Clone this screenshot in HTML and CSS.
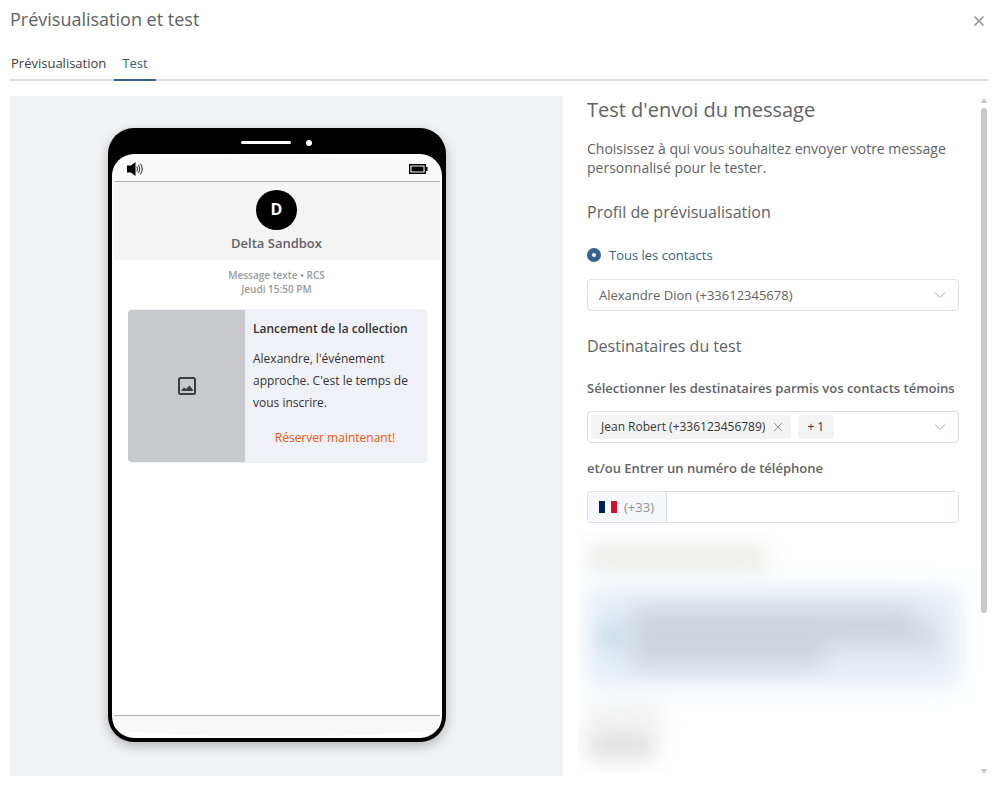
FILE: index.html
```html
<!DOCTYPE html>
<html lang="fr">
<head>
<meta charset="utf-8">
<meta name="viewport" content="width=device-width, initial-scale=1">
<title>Prévisualisation et test</title>
<link rel="stylesheet" href="styles.css">
</head>
<body>
<main class="dialog">
  <header class="dialog-header">
    <h1 class="dialog-title">Prévisualisation et test</h1>
    <button class="icon-button dialog-close" type="button" aria-label="Fermer">
      <svg width="12" height="12" viewBox="0 0 12 12"><path d="M1.500 1.500 10.500 10.500M10.500 1.500 1.500 10.500" fill="none" stroke="#909399" stroke-width="1.500"/></svg>
    </button>
  </header>
  <nav class="tabs">
    <button class="tab" type="button">Prévisualisation</button>
    <button class="tab tab-active" type="button">Test</button>
  </nav>
  <div class="columns">
    <section class="stage">
      <div class="phone">
        <div class="bezel"><span class="speaker"></span><span class="camera"></span></div>
        <div class="screen">
          <div class="status">
            <svg width="17" height="14" viewBox="0 0 17 14"><path d="M0 3.500H4L8.500 0V14L4 10.500H0Z"/><path d="M9.800 4.500Q11.300 7 9.800 9.500M11.600 3Q14 7 11.600 11M13.400 1.700Q17.200 7 13.400 12.300" fill="none" stroke="#222"/></svg>
            <svg width="19" height="10" viewBox="0 0 19 10"><path d="M.7.7H16.300V9.300H.7Z" fill="#fff" stroke="#000" stroke-width="1.400"/><path d="M2.500 2.500H14.500V7.500H2.500ZM17 3H18.500V7H17Z"/></svg>
          </div>
          <div class="sender">
            <span class="avatar">D</span>
            <span class="sender-name">Delta Sandbox</span>
          </div>
          <div class="thread">
            <p class="meta">Message texte • RCS<br>Jeudi 15:50 PM</p>
            <article class="card">
              <div class="card-media">
                <svg width="18" height="18" viewBox="0 0 18 18"><rect x="1" y="1" width="16" height="16" rx="1.500" fill="none" stroke="#3d3d3d" stroke-width="2"/><path d="M3.500 14V13L6 10.500 8 12 11.500 8.500 15 13V14Z" fill="#3d3d3d"/></svg>
              </div>
              <div class="card-body">
                <h2 class="card-title">Lancement de la collection</h2>
                <p class="card-text">Alexandre, l'événement approche. C'est le temps de vous inscrire.</p>
                <a class="card-action" href="#">Réserver maintenant!</a>
              </div>
            </article>
          </div>
          <div class="home-bar"></div>
        </div>
      </div>
    </section>
    <section class="settings">
      <form class="form">
        <h2 class="form-title">Test d'envoi du message</h2>
        <p class="intro">Choisissez à qui vous souhaitez envoyer votre message personnalisé pour le tester.</p>
        <h3 class="section-title">Profil de prévisualisation</h3>
        <label class="radio"><input class="radio-input" type="radio" name="profile" checked>Tous les contacts</label>
        <div class="field select-field">
          <select class="select" aria-label="Profil">
            <option>Alexandre Dion (+33612345678)</option>
          </select>
          <svg class="chevron" width="12" height="8" viewBox="0 0 12 8"><path d="M1 1.500 6 6.500 11 1.500" fill="none" stroke="#a8abb2"/></svg>
        </div>
        <h3 class="section-title recipients-title">Destinataires du test</h3>
        <span class="label" id="recipients-label">Sélectionner les destinataires parmis vos contacts témoins</span>
        <div class="field tags-field" role="group" aria-labelledby="recipients-label">
          <span class="tag">Jean Robert (+336123456789)
            <button class="icon-button" type="button" aria-label="Retirer Jean Robert"><svg width="10" height="10" viewBox="0 0 10 10"><path d="M1 1 9 9M9 1 1 9" fill="none" stroke="#909399"/></svg></button>
          </span>
          <span class="tag tag-more">+ 1</span>
          <button class="icon-button field-toggle" type="button" aria-label="Ouvrir la liste"><svg width="12" height="8" viewBox="0 0 12 8"><path d="M1 1.500 6 6.500 11 1.500" fill="none" stroke="#a8abb2"/></svg></button>
        </div>
        <label class="label" for="phone">et/ou Entrer un numéro de téléphone</label>
        <div class="field phone-field">
          <span class="prefix">
            <svg width="18" height="12" viewBox="0 0 18 12"><path d="M0 0H6V12H0Z" fill="#00205b"/><path d="M6 0H12V12H6Z" fill="#fff"/><path d="M12 0H18V12H12Z" fill="#d80f27"/></svg>
            (+33)
          </span>
          <input class="phone-input" id="phone" type="tel">
        </div>
      </form>
      <div class="redacted" aria-hidden="true">
        <div class="smudge smudge-heading"></div>
        <div class="smudge-box">
          <div class="smudge-dot"></div>
          <div class="smudge-lines">
            <div class="smudge-line line-first"></div>
            <div class="smudge-line"></div>
            <div class="smudge-line line-last"></div>
          </div>
        </div>
        <div class="smudge smudge-label"></div>
        <div class="smudge smudge-value"></div>
      </div>
    </section>
    <div class="scrollbar" aria-hidden="true">
      <svg width="6" height="5" viewBox="0 0 6 5"><path d="M3 0 6 5H0Z" fill="#c8c8c8"/></svg>
      <div class="track"><div class="thumb"></div></div>
      <svg width="6" height="5" viewBox="0 0 6 5"><path d="M0 0H6L3 5Z" fill="#c8c8c8"/></svg>
    </div>
  </div>
</main>
</body>
</html>
```

FILE: styles.css
```css
* {
  box-sizing: border-box;
}

body {
  margin: 0;
  background: #fff;
  color: #606266;
  font: 13px/20px "Open Sans", "Noto Sans", sans-serif;
}

h1, h2, h3, p {
  margin: 0;
}

button, input, select {
  font: inherit;
  color: inherit;
}

svg {
  display: block;
  flex: none;
}

.dialog {
  display: flex;
  flex-direction: column;
  min-height: 100vh;
  padding: 7px 10px 8px;
}

.dialog-header {
  display: flex;
  align-items: center;
  justify-content: space-between;
  padding-right: 5px;
}

.dialog-title {
  font-size: 18px;
  line-height: 24px;
  font-weight: 400;
}

.icon-button {
  padding: 0;
  border: 0;
  background: none;
}

.dialog-close {
  padding-top: 4px;
}

.tabs {
  display: flex;
  margin: 17px 2px 15px 0;
  box-shadow: inset 0 -2px #dcdcdc;
}

.tab {
  padding: 5px 8px 6px;
  border: 0;
  border-bottom: 2px solid transparent;
  background: none;
  color: #404040;
}

.tab:first-child {
  padding-left: 1px;
}

.tab-active {
  border-color: #35618a;
  color: #35618a;
}

.columns {
  flex: 1;
  display: grid;
  grid-template-columns: minmax(380px, 553fr) minmax(320px, 417fr) 10px;
}

.stage {
  display: flex;
  justify-content: center;
  padding: 32px 35px 34px 16px;
  margin-bottom: 1px;
  background: #f1f2f4;
}

.phone {
  display: flex;
  flex-direction: column;
  width: 338px;
  padding: 0 4px 4px;
  border-radius: 26px;
  background: #000;
  box-shadow: 0 4px 12px rgba(0, 0, 0, .25);
}

.bezel {
  display: flex;
  align-items: center;
  justify-content: center;
  gap: 15px;
  height: 26px;
  padding: 3px 2px 0 0;
}

.speaker {
  width: 50px;
  height: 3px;
  border-radius: 2px;
  background: #fff;
}

.camera {
  width: 6px;
  height: 6px;
  border-radius: 50%;
  background: #fff;
}

.screen {
  flex: 1;
  display: flex;
  flex-direction: column;
  padding: 2px;
  border-radius: 22px;
  background: #fff;
  overflow: hidden;
}

.status {
  display: flex;
  align-items: center;
  justify-content: space-between;
  height: 26px;
  padding: 0 12px 0 13px;
  border-bottom: 1px solid #b0b0b0;
  border-radius: 50% 50% 0 0 / 10px 10px 0 0;
  background: #f9f9f9;
}

.sender {
  display: flex;
  flex-direction: column;
  align-items: center;
  gap: 3px;
  padding: 8px 1px 7px 0;
  background: #f4f4f4;
}

.avatar {
  width: 41px;
  height: 40px;
  border-radius: 50%;
  background: #000;
  color: #fff;
  font-size: 16px;
  line-height: 38px;
  font-weight: 700;
  text-align: center;
}

.sender-name {
  font-weight: 600;
}

.thread {
  flex: 1;
  padding: 8px 13px 0 14px;
}

.meta {
  padding-right: 2px;
  color: #999;
  font-size: 10px;
  line-height: 14px;
  font-weight: 600;
  text-align: center;
}

.card {
  display: grid;
  grid-template-columns: 117px 1fr;
  margin-top: 13px;
  border-radius: 4px;
  background: #f0f1f6;
  color: #333;
  font-size: 12px;
  line-height: 22px;
  overflow: hidden;
}

.card-media {
  display: grid;
  place-items: center;
  margin: 1px 0;
  border-radius: 4px 0 0 4px;
  background: #c8c9cc;
}

.card-body {
  display: flex;
  flex-direction: column;
  padding: 9px 10px 14px 8px;
}

.card-title {
  font-size: 12px;
  font-weight: 600;
}

.card-text {
  margin: 8px 0 13px;
}

.card-action {
  color: #f4510b;
  text-align: center;
  text-decoration: none;
}

.home-bar {
  height: 21px;
  border-top: 1px solid #b0b0b0;
  border-radius: 0 0 50% 50% / 0 0 8px 8px;
  background: #f8f8f8;
}

.settings {
  display: flex;
  flex-direction: column;
  padding: 0 0 4px 14px;
}

.form {
  padding: 0 21px 0 10px;
}

.form-title {
  font-size: 20px;
  line-height: 28px;
  font-weight: 500;
}

.intro {
  margin: 15px 0 23px;
  font-size: 14px;
  line-height: 19px;
}

.section-title {
  font-size: 16px;
  line-height: 24px;
  font-weight: 500;
}

.radio {
  display: flex;
  align-items: center;
  gap: 8px;
  margin: 21px 0 14px;
  color: #35618a;
  font-weight: 500;
}

.radio-input {
  appearance: none;
  width: 14px;
  height: 14px;
  margin: 0;
  border: 5px solid #35618a;
  border-radius: 50%;
  background: #fff;
}

.field {
  display: flex;
  align-items: center;
  height: 32px;
  border: 1px solid #dcdfe6;
  border-radius: 4px;
  background: #fff;
}

.select-field {
  display: grid;
  align-items: stretch;
}

.select {
  grid-area: 1 / 1;
  appearance: none;
  min-width: 0;
  padding: 0 32px 0 11px;
  border: 0;
  background: none;
}

.chevron {
  grid-area: 1 / 1;
  place-self: center end;
  margin-right: 12px;
  pointer-events: none;
}

.recipients-title {
  margin: 23px 0 20px;
}

.label {
  display: block;
  font-weight: 600;
}

.label + .field {
  margin: 13px 0 15px;
}

.tags-field {
  gap: 7px;
  padding: 0 12px 0 3px;
}

.tag {
  display: flex;
  align-items: center;
  gap: 8px;
  height: 24px;
  padding: 0 8px 0 10px;
  border-radius: 4px;
  background: #f4f4f5;
  color: #333;
  font-size: 12px;
}

.tag-more {
  padding: 0 10px 0 9px;
}

.field-toggle {
  margin-left: auto;
}

.phone-field {
  align-items: stretch;
  overflow: hidden;
}

.prefix {
  display: flex;
  align-items: center;
  gap: 7px;
  padding: 0 12px 0 11px;
  border-right: 1px solid #dcdfe6;
  background: #f5f7fa;
  color: #909399;
}

.phone-input {
  flex: 1;
  min-width: 0;
  padding: 0 11px;
  border: 0;
  outline: 0;
}

.redacted {
  flex: 1;
  margin-top: -5px;
  padding: 16px 20px 0 0;
  overflow: hidden;
}

.smudge {
  filter: blur(12px);
}

.smudge-heading {
  width: 180px;
  height: 18px;
  margin-left: 10px;
  background: #e2e2e1;
}

.smudge-box {
  display: flex;
  align-items: center;
  gap: 12px;
  height: 100px;
  margin: 20px 0 22px 10px;
  padding: 0 20px 0 14px;
  background: #e5edf6;
  filter: blur(12px);
}

.smudge-dot {
  width: 18px;
  height: 20px;
  background: #acd0dc;
}

.smudge-lines {
  flex: 1;
}

.smudge-line {
  height: 20px;
  background: #cfd3dc;
}

.line-first {
  width: 92%;
}

.line-last {
  width: 62%;
}

.smudge-label {
  width: 78px;
  height: 12px;
  margin-left: 8px;
  background: #e4e4e4;
}

.smudge-value {
  width: 68px;
  height: 20px;
  margin: 14px 0 0 10px;
  background: #d2d2d2;
}

.scrollbar {
  display: flex;
  flex-direction: column;
  align-items: center;
  gap: 5px;
  padding: 2px 2px 3px 0;
}

.track {
  flex: 1;
  width: 6px;
}

.thumb {
  width: 6px;
  height: 77%;
  border-radius: 3px;
  background: #c8c8c8;
}
```
